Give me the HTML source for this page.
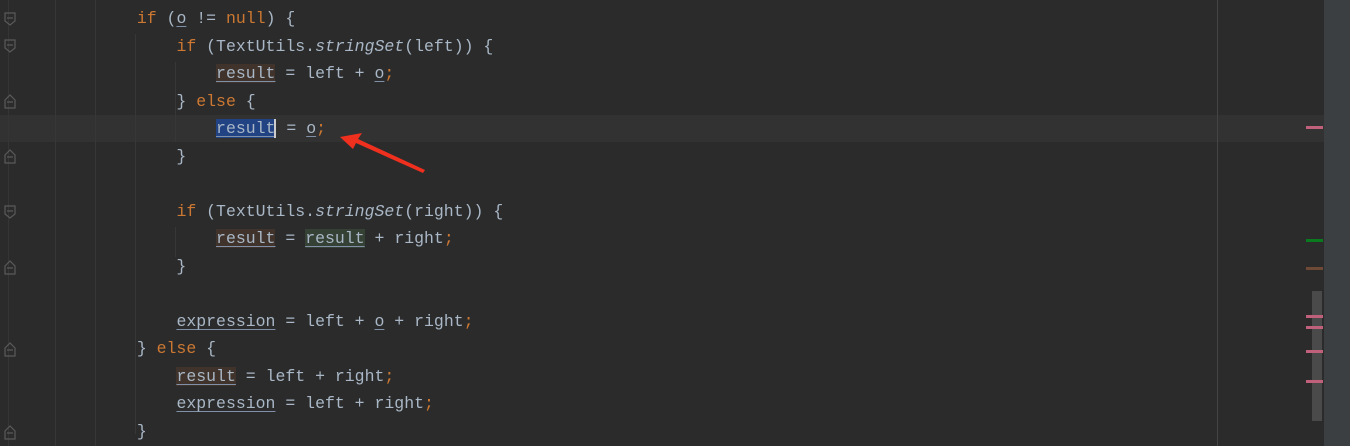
<!DOCTYPE html>
<html><head><meta charset="utf-8"><style>
body{margin:0;width:1350px;height:446px;background:#2b2b2b;overflow:hidden;position:relative;font-family:"Liberation Mono",monospace;font-size:16.5px;color:#a9b7c6}
.l{position:absolute;left:18px;height:27.5px;line-height:27.5px;white-space:pre}
.k{color:#cc7832}.i{font-style:italic}
.u{text-decoration:underline;text-decoration-color:#8090a8;text-underline-offset:3px}
.w{background:#40332b}.r{background:#344134}.s{background:#214283}
.g{position:absolute;top:0;height:446px;width:1px;background:#373737}
.m{position:absolute;left:1306px;width:17px;height:3px;background:#c0607a}
</style></head><body>
<div style="position:absolute;left:0;top:115px;width:1324px;height:27px;background:#323232"></div>
<div class="g" style="left:55px"></div><div class="g" style="left:95px"></div>
<div style="position:absolute;left:135px;top:34px;height:400px;width:1px;background:#373737"></div>
<div style="position:absolute;left:175px;top:62px;height:80px;width:1px;background:#373737"></div>
<div style="position:absolute;left:175px;top:227px;height:30px;width:1px;background:#373737"></div>
<div style="position:absolute;left:1217px;top:0;height:446px;width:1px;background:#444"></div>
<div style="position:absolute;left:8px;top:0;height:446px;width:1px;background:#353535"></div>
<div class="l" style="top:5px">            <span class="k">if</span> (<span class="u">o</span> != <span class="k">null</span>) {</div>
<div class="l" style="top:33px">                <span class="k">if</span> (TextUtils.<span class="i">stringSet</span>(left)) {</div>
<div class="l" style="top:60px">                    <span class="u w">result</span> = left + <span class="u">o</span><span class="k">;</span></div>
<div class="l" style="top:88px">                } <span class="k">else</span> {</div>
<div class="l" style="top:115px">                    <span class="u s">result</span><span style="border-left:2px solid #ccc;margin-left:-1px"></span> = <span class="u">o</span><span class="k">;</span></div>
<div class="l" style="top:143px">                }</div>
<div class="l" style="top:198px">                <span class="k">if</span> (TextUtils.<span class="i">stringSet</span>(right)) {</div>
<div class="l" style="top:225px">                    <span class="u w">result</span> = <span class="u r">result</span> + right<span class="k">;</span></div>
<div class="l" style="top:253px">                }</div>
<div class="l" style="top:308px">                <span class="u">expression</span> = left + <span class="u">o</span> + right<span class="k">;</span></div>
<div class="l" style="top:335px">            } <span class="k">else</span> {</div>
<div class="l" style="top:363px">                <span class="u w">result</span> = left + right<span class="k">;</span></div>
<div class="l" style="top:390px">                <span class="u">expression</span> = left + right<span class="k">;</span></div>
<div class="l" style="top:418px">            }</div>
<svg style="position:absolute;left:0;top:0" width="20" height="446">
<g fill="none" stroke="#5a5a5a" stroke-width="1.2">
<path d="M5 13h10v8l-5 4l-5-4z M7 18h6"/>
<path d="M5 40h10v8l-5 4l-5-4z M7 45h6"/>
<path d="M5 100l5-5l5 5v8h-10z M7 102h6"/>
<path d="M5 155l5-5l5 5v8h-10z M7 157h6"/>
<path d="M5 206h10v8l-5 4l-5-4z M7 211h6"/>
<path d="M5 266l5-5l5 5v8h-10z M7 268h6"/>
<path d="M5 348l5-5l5 5v8h-10z M7 350h6"/>
<path d="M5 431l5-5l5 5v8h-10z M7 433h6"/>
</g></svg>
<svg style="position:absolute;left:0;top:0" width="1350" height="446">
<path d="M340 137 L362 133 L358 139 L425 170 L423 173 L356 143 L353 149 Z" fill="#f0301e"/>
</svg>
<div style="position:absolute;left:1324px;top:0;width:26px;height:446px;background:#3c3f41"></div>
<div style="position:absolute;left:1312px;top:291px;width:10px;height:130px;background:#4a4a4a"></div>
<div class="m" style="top:126px"></div>
<div class="m" style="top:239px;background:#0a7a1e"></div>
<div class="m" style="top:267px;background:#6e4a36"></div>
<div class="m" style="top:315px"></div><div class="m" style="top:326px"></div>
<div class="m" style="top:350px"></div><div class="m" style="top:380px"></div>
</body></html>
